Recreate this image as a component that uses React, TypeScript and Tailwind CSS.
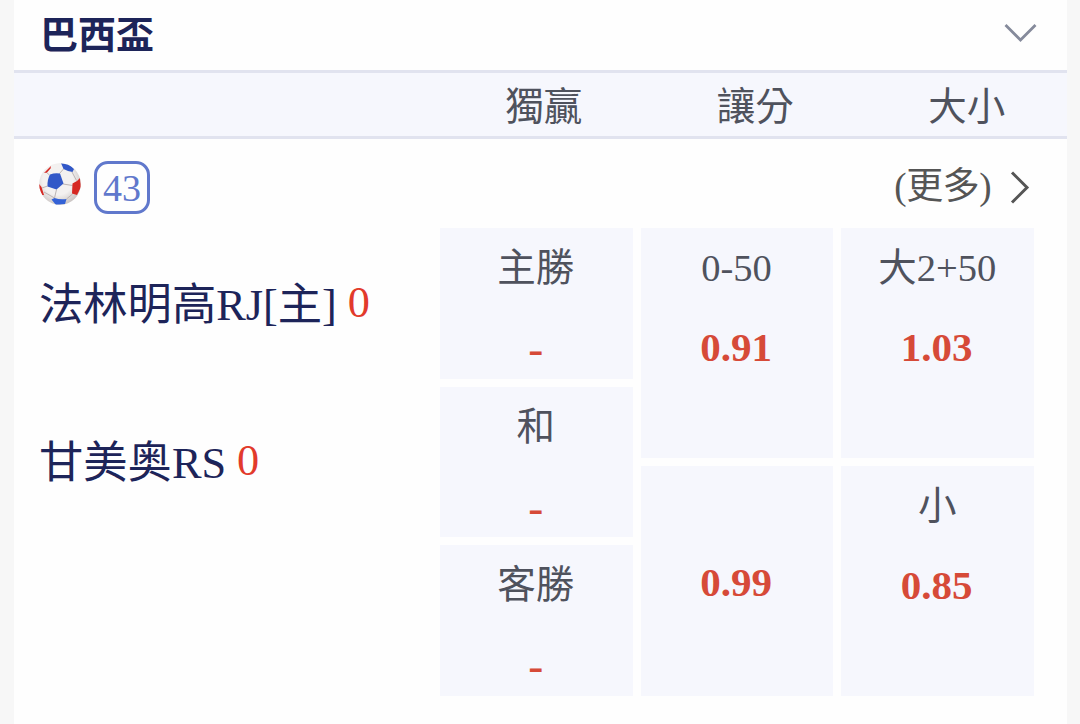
const columns = ['獨贏', '讓分', '大小']

const teams = [
    { name: '法林明高RJ[主]', score: 0 },
    { name: '甘美奥RS', score: 0 }
]

const winOdds = [
    { label: '主勝', value: '-' },
    { label: '和', value: '-' },
    { label: '客勝', value: '-' }
]

const handicapOdds = [
    { label: '0-50', value: '0.91' },
    { label: '', value: '0.99' }
]

const totalOdds = [
    { label: '大2+50', value: '1.03' },
    { label: '小', value: '0.85' }
]

function SoccerBall() {
    return (
        <svg viewBox="0 0 42 42" className="h-[42px] w-[42px]">
            <defs>
                <radialGradient id="ball" cx="0.45" cy="0.4" r="0.6">
                    <stop offset="0.6" stopColor="#f3f1f0" />
                    <stop offset="1" stopColor="#cbc5c4" />
                </radialGradient>
                <clipPath id="ballClip">
                    <circle cx="21" cy="21" r="20.8" />
                </clipPath>
            </defs>
            <g clipPath="url(#ballClip)">
                <rect width="42" height="42" fill="url(#ball)" />
                {/* Seams */}
                <path
                    d="M10.500 12L7 9M20.500 10.500L24.500 6M24 21L33.500 22.500M17.500 26.500L15.500 35M8.500 23L3 25M33 9L37.500 17.500M15.500 35L5 29M27.500 36L33.500 31"
                    fill="none"
                    stroke="#bcb4b3"
                    strokeWidth="1"
                />
                {/* Patches */}
                <path d="M11 11.500Q16 9.500 21 10.500L24.500 20.500L17.500 26.500L8.500 23.500Q8 17 11 11.500Z" fill="#3158c8" />
                <path d="M22 0L30 1L35 6L33.500 9Q29 8.500 24.500 6Z" fill="#3158c8" />
                <path d="M12.500 36.500L15.500 35Q21 37 27.500 36L26 41L17 42Z" fill="#3462d6" />
                <path d="M33.500 20.500Q38 19 41 15L42 24L38 32L33 30.500Z" fill="#d62822" />
                <path d="M5 10L12 3L11.500 5.500L8 9.500Z" fill="#d62822" />
                <path d="M0 21L2.500 24L5 32L3 32L0 26Z" fill="#d62822" />
            </g>
        </svg>
    )
}

function OddsCell({ label, value }: { label: string, value: string }) {
    return (
        <div className={`flex flex-1 flex-col items-center bg-[#f6f7fd] ${label ? '' : 'justify-center'}`}>
            {label && (
                <div className="mt-[16px] h-[48px] pr-px text-[38.500px] leading-[48px] text-[#4f525d]">{label}</div>
            )}
            <div className={`h-[48px] pr-[2px] text-[41px] leading-[48px] font-bold text-[#d64a38] ${label ? 'mt-[31px]' : 'mt-[2px]'} ${value === '-' ? 'translate-y-[2px] scale-x-110' : ''}`}>
                {value}
            </div>
        </div>
    )
}

function OddsColumn({ items }: { items: { label: string, value: string }[] }) {
    return (
        <div className="flex flex-1 flex-col gap-[8px]">
            {items.map((item, index) => (
                <OddsCell key={index} label={item.label} value={item.value} />
            ))}
        </div>
    )
}

export default function App() {
    return (
        <div className="h-[724px] w-[1080px] overflow-hidden bg-[#f7f7f7] pr-[13px] pl-[14px] font-['Liberation_Serif','Noto_Sans_CJK_TC',serif]">
            <div className="flex h-full flex-col bg-[#fefefe]">
                {/* League title */}
                <header className="flex h-[70px] items-center justify-between pr-[30px] pl-[26px]">
                    <h1 className="text-[38px] leading-[48px] font-bold text-[#1d2459]">巴西盃</h1>
                    <svg viewBox="0 0 33 20" className="mb-[4px] h-[20px] w-[33px]" fill="none" stroke="#858a9b" strokeWidth="2.800">
                        <path d="M1.500 2L16.500 17L31.500 2" />
                    </svg>
                </header>

                {/* Market names */}
                <div className="flex h-[69px] items-center border-y-[3px] border-[#e1e3ef] bg-[#f6f7fd] pt-[5px] pl-[424px] text-[38.500px] leading-[48px] text-[#4f525d]">
                    {columns.map((column) => (
                        <div key={column} className="w-[211.500px] shrink-0 text-center">{column}</div>
                    ))}
                </div>

                <div className="flex h-[89px] items-center justify-between pr-[37px] pl-[25px]">
                    <div className="flex items-center gap-[13px]">
                        <SoccerBall />
                        <span className="mt-[8px] flex h-[53px] w-[56px] items-center justify-center rounded-[14px] border-[3px] border-[#6078cc] text-[38px] leading-none text-[#6078cc]">
                            43
                        </span>
                    </div>
                    <div className="flex items-center gap-[19px] pt-[7px] text-[37px] leading-[48px] text-[#555]">
                        <span className="tracking-[-0.500px]">(更多)</span>
                        <svg viewBox="0 0 20 33" className="h-[33px] w-[20px]" fill="none" stroke="#555" strokeWidth="3">
                            <path d="M2 1.500L17 16.500L2 31.500" />
                        </svg>
                    </div>
                </div>

                {/* Teams and odds */}
                <div className="flex pr-[33px] pl-[26px]">
                    <div className="flex w-[400px] flex-col pt-[48px] text-[44.300px]">
                        {teams.map((team) => (
                            <div key={team.name} className="flex h-[158px] items-start leading-[60px]">
                                <span className="-ml-px text-[#1d2459]">{team.name}</span>
                                <span className="-mt-[3px] ml-[11px] text-[#e23a2b]">{team.score}</span>
                            </div>
                        ))}
                    </div>
                    <div className="flex h-[468px] flex-1 gap-[8px]">
                        <OddsColumn items={winOdds} />
                        <OddsColumn items={handicapOdds} />
                        <OddsColumn items={totalOdds} />
                    </div>
                </div>
            </div>
        </div>
    )
}
